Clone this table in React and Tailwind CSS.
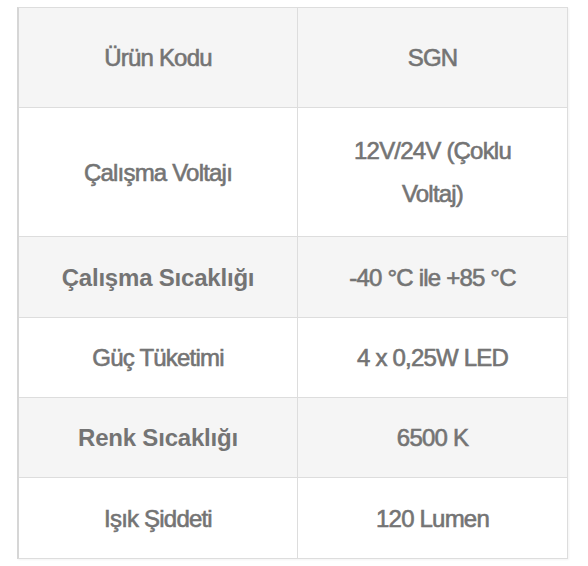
const specs = [
    { label: 'Ürün Kodu', value: 'SGN', height: 'h-[99px]', shaded: true },
    { label: 'Çalışma Voltajı', value: '12V/24V (Çoklu Voltaj)', height: 'h-[129px]' },
    { label: 'Çalışma Sıcaklığı', value: '-40 °C ile +85 °C', height: 'h-[81px]', shaded: true, bold: true },
    { label: 'Güç Tüketimi', value: '4 x 0,25W LED', height: 'h-[80px]' },
    { label: 'Renk Sıcaklığı', value: '6500 K', height: 'h-[80px]', shaded: true, bold: true },
    { label: 'Işık Şiddeti', value: '120 Lumen', height: 'h-[81px]' },
];

const App = () => {
    return (
        <div className="min-h-screen bg-white pt-[7px] pl-[17px] font-['Liberation_Sans',Arial,sans-serif]">
            <div className="w-[551px] border-t border-r border-b border-l-2 border-[#dddddd] border-l-[#d6d6d6] shadow-[1px_1px_2px_rgba(0,0,0,0.05)]">
                {specs.map((row, i) => (
                    <div
                        key={row.label}
                        className={`grid grid-cols-[278px_1fr] ${row.height} ${i > 0 ? 'border-t border-[#dddddd]' : ''} ${row.shaded ? 'bg-[#f5f5f5]' : 'bg-white'}`}
                    >
                        <div
                            className={`flex items-center justify-center px-6 text-center text-[24px] leading-[43px] text-[#747474] ${
                                row.bold ? 'font-bold tracking-[-0.2px]' : 'tracking-[-0.8px] [-webkit-text-stroke:0.6px_#747474]'
                            }`}
                        >
                            {row.label}
                        </div>
                        <div className="flex items-center justify-center border-l border-[#dddddd] px-[40px] text-center text-[24px] leading-[43px] text-[#747474] tracking-[-0.8px] [-webkit-text-stroke:0.6px_#747474]">
                            {row.value}
                        </div>
                    </div>
                ))}
            </div>
        </div>
    );
};

export default App;
